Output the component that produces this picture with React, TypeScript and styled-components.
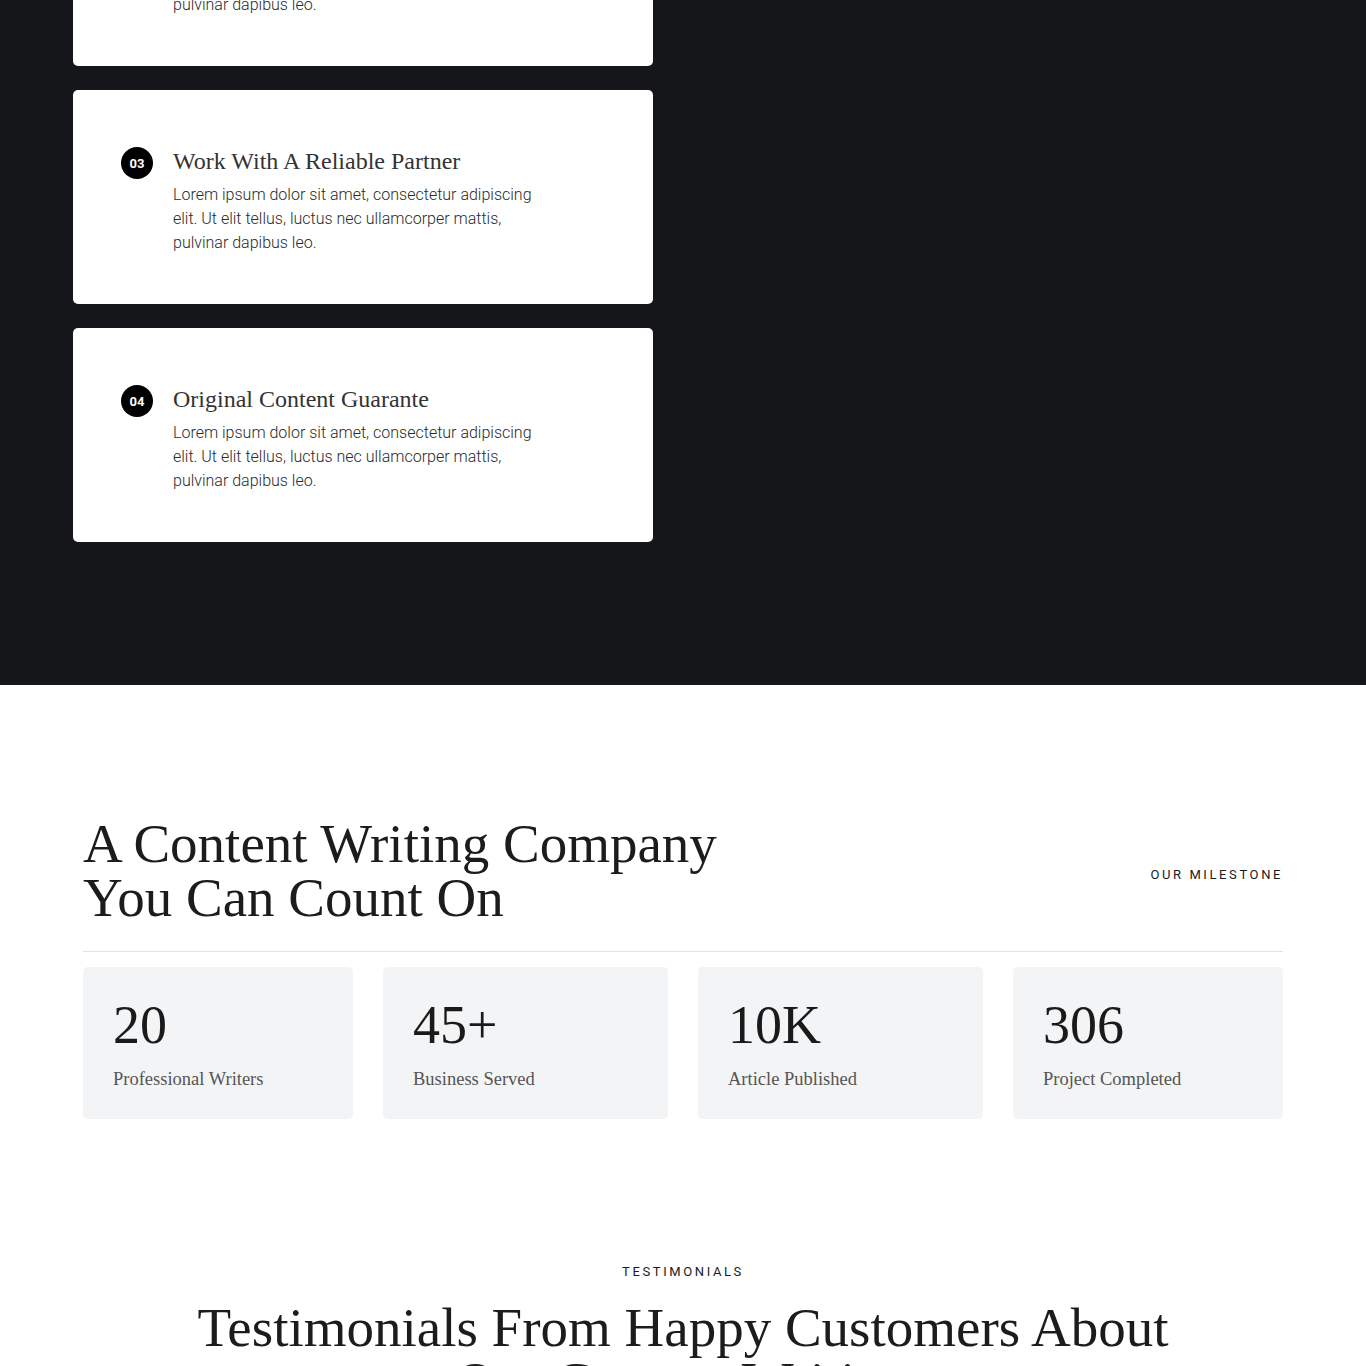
import React from 'react';
import styled, { createGlobalStyle } from 'styled-components';

const GlobalStyle = createGlobalStyle`
  body {
    margin: 0;
    background: #ffffff;
    font-family: Roboto, "Noto Sans", Arial, sans-serif;
    color: #1b1b1b;
  }
  * {
    box-sizing: border-box;
  }
`;

const serif = `"Liberation Serif", "DejaVu Serif", serif`;

const DarkSection = styled.section`
  background-color: #151619;
  padding-bottom: 143px;
  overflow: hidden;
`;

const DarkContainer = styled.div`
  width: 1220px;
  margin: 0 auto;
  display: grid;
  grid-template-columns: 580px 1fr;
`;

const FeatureList = styled.div`
  display: flex;
  flex-direction: column;
  gap: 24px;
  margin-top: -148px;
`;

const FeatureCard = styled.div`
  background: #ffffff;
  border-radius: 5px;
  height: 214px;
  padding: 57px 48px 0;
  display: flex;
  gap: 20px;
`;

const StepBadge = styled.span`
  flex: 0 0 32px;
  width: 32px;
  height: 32px;
  border-radius: 50%;
  background: #000000;
  color: #ffffff;
  font-family: Roboto, Arial, sans-serif;
  font-weight: 700;
  font-size: 13px;
  display: flex;
  align-items: center;
  justify-content: center;
`;

const FeatureBody = styled.div`
  display: flex;
  flex-direction: column;
`;

const FeatureTitle = styled.h3`
  margin: 0;
  font-family: ${serif};
  font-weight: 400;
  font-size: 24px;
  line-height: 28px;
  color: #333333;
`;

const FeatureText = styled.p`
  margin: 8px 0 0;
  width: 372px;
  font-weight: 300;
  font-size: 16px;
  line-height: 24px;
  color: #2a2a2a;
`;

const MilestoneSection = styled.section`
  width: 1200px;
  margin: 0 auto;
  padding-top: 132px;
`;

const MilestoneHeader = styled.div`
  display: flex;
  align-items: center;
  justify-content: space-between;
  padding-bottom: 26px;
  border-bottom: 1px solid #e2e2e2;
`;

const BigHeading = styled.h2<{ $center?: boolean }>`
  margin: 0;
  font-family: ${serif};
  font-weight: 400;
  font-size: 55px;
  line-height: 54px;
  color: #1c1c1c;
  text-align: ${(p) => (p.$center ? 'center' : 'left')};
`;

const Eyebrow = styled.span<{ $offset?: number }>`
  font-family: Roboto, Arial, sans-serif;
  font-size: 13px;
  font-weight: 400;
  letter-spacing: 2.6px;
  text-transform: uppercase;
  color: #1b1b1b;
  margin-top: ${(p) => p.$offset ?? 0}px;
`;

const StatsGrid = styled.div`
  display: grid;
  grid-template-columns: 270px 285px 285px 270px;
  gap: 30px;
  margin-top: 15px;
`;

const StatCard = styled.div`
  background: #f3f4f6;
  border-radius: 5px;
  height: 152px;
  padding: 28px 30px 0;
`;

const StatValue = styled.div`
  font-family: ${serif};
  font-weight: 400;
  font-size: 54px;
  line-height: 60px;
  color: #1a1a1a;
`;

const StatLabel = styled.div`
  margin-top: 12px;
  font-family: ${serif};
  font-size: 18.5px;
  line-height: 24px;
  color: #555555;
`;

const TestimonialSection = styled.section`
  padding-top: 145px;
  display: flex;
  flex-direction: column;
  align-items: center;
  gap: 22px;
  width: 1000px;
  margin: 0 auto;
`;

const features = [
  { step: '02', title: 'Experienced Team Of Writers' },
  { step: '03', title: 'Work With A Reliable Partner' },
  { step: '04', title: 'Original Content Guarante' },
];

const stats = [
  { value: '20', label: 'Professional Writers' },
  { value: '45+', label: 'Business Served' },
  { value: '10K', label: 'Article Published' },
  { value: '306', label: 'Project Completed' },
];

const lorem =
  'Lorem ipsum dolor sit amet, consectetur adipiscing elit. Ut elit tellus, luctus nec ullamcorper mattis, pulvinar dapibus leo.';

export default function App() {
  return (
    <>
      <GlobalStyle />
      <DarkSection>
        <DarkContainer>
          <FeatureList>
            {features.map((f) => (
              <FeatureCard key={f.step}>
                <StepBadge>{f.step}</StepBadge>
                <FeatureBody>
                  <FeatureTitle>{f.title}</FeatureTitle>
                  <FeatureText>{lorem}</FeatureText>
                </FeatureBody>
              </FeatureCard>
            ))}
          </FeatureList>
          <div />
        </DarkContainer>
      </DarkSection>

      <MilestoneSection>
        <MilestoneHeader>
          <BigHeading>
            A Content Writing Company
            <br />
            You Can Count On
          </BigHeading>
          <Eyebrow $offset={6}>Our Milestone</Eyebrow>
        </MilestoneHeader>
        <StatsGrid>
          {stats.map((s) => (
            <StatCard key={s.label}>
              <StatValue>{s.value}</StatValue>
              <StatLabel>{s.label}</StatLabel>
            </StatCard>
          ))}
        </StatsGrid>
      </MilestoneSection>

      <TestimonialSection>
        <Eyebrow>Testimonials</Eyebrow>
        <BigHeading $center>
          Testimonials From Happy Customers About Our Content Writing
        </BigHeading>
      </TestimonialSection>
    </>
  );
}
